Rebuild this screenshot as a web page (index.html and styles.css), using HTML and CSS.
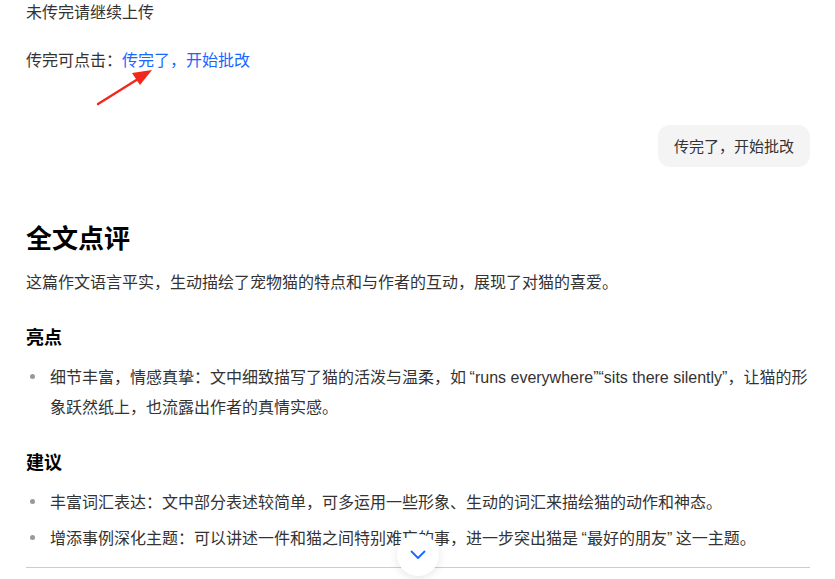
FILE: index.html
```html
<!DOCTYPE html>
<html lang="zh-CN">

<head>
    <meta charset="UTF-8">
    <meta name="viewport" content="width=device-width, initial-scale=1.0">
    <title>作文批改</title>

    <link rel="stylesheet" href="styles.css">
</head>

<body>

    <div class="chat">
        <div class="msg-bot">
            <p class="tip">未传完请继续上传</p>
            <p class="tip tip-action">传完可点击：<a href="#" class="link">传完了，开始批改</a></p>
        </div>

        <div class="msg-user">
            <div class="bubble">传完了，开始批改</div>
        </div>

        <div class="review">
            <h2>全文点评</h2>
            <p>这篇作文语言平实，生动描绘了宠物猫的特点和与作者的互动，展现了对猫的喜爱。</p>

            <h3>亮点</h3>
            <ul>
                <li>细节丰富，情感真挚：文中细致描写了猫的活泼与温柔，如 <span class="en">“runs everywhere”“sits there silently”</span>，让猫的形象跃然纸上，也流露出作者的真情实感。</li>
            </ul>

            <h3 class="second">建议</h3>
            <ul>
                <li>丰富词汇表达：文中部分表述较简单，可多运用一些形象、生动的词汇来描绘猫的动作和神态。</li>
                <li>增添事例深化主题：可以讲述一件和猫之间特别难忘的事，进一步突出猫是 <span class="en">“</span>最好的朋友<span class="en">”</span> 这一主题。</li>
            </ul>

            <hr>
        </div>
    </div>

    <!-- red annotation arrow -->
    <svg class="arrow" width="70" height="45" viewBox="0 0 70 45">
        <line x1="6" y1="40" x2="46" y2="15" stroke="#f0281e" stroke-width="2.4" stroke-linecap="round" />
        <polygon points="60,6 40,9 48,21" fill="#f0281e" />
    </svg>

    <button class="scroll-down" type="button">
        <svg width="16" height="10" viewBox="0 0 16 10">
            <polyline points="1.5,1.5 8,8 14.5,1.5" fill="none" stroke="#1a66ff" stroke-width="1.8" stroke-linecap="round" stroke-linejoin="round" />
        </svg>
    </button>

</body>

</html>
```

FILE: styles.css
```css
body {
    font-family: "Microsoft YaHei", "Noto Sans CJK SC", "Noto Sans", sans-serif;
    margin: 0;
    color: #333;
    background-color: #fff;
    overflow: hidden;
    position: relative;
    height: 579px;
}

.chat {
    padding: 0 25px 0 26px;
}

.tip {
    margin: 0;
    font-size: 16px;
    line-height: 22px;
}

.tip-action {
    margin-top: 26px;
}

.link {
    color: #1a66ff;
    text-decoration: none;
}

.msg-user {
    display: flex;
    justify-content: flex-end;
    margin-top: 55px;
}

.bubble {
    background-color: #f4f4f5;
    border-radius: 12px;
    padding: 10px 16px;
    font-size: 15px;
    line-height: 22px;
    color: #333;
}

.review {
    margin-top: 52px;
}

.review h2 {
    margin: 0;
    font-size: 26px;
    line-height: 36px;
    font-weight: 700;
    color: #000;
}

.review p {
    margin: 12px 0 0;
    font-size: 16px;
    line-height: 28px;
}

.review h3 {
    margin: 28px 0 0;
    font-size: 18px;
    line-height: 26px;
    font-weight: 700;
    color: #000;
}

.review ul {
    list-style: none;
    margin: 13px 0 0;
    padding: 0;
}

.review li {
    position: relative;
    padding-left: 24px;
    font-size: 16px;
    line-height: 28px;
    margin-bottom: 8px;
}

.review li::before {
    content: "";
    position: absolute;
    left: 4px;
    top: 12px;
    width: 5px;
    height: 5px;
    border-radius: 50%;
    background-color: #999;
}

.en {
    font-family: "Liberation Sans", Arial, sans-serif;
    font-size: 16px;
}

.review hr {
    margin: 14px 0 0;
    border: none;
    border-top: 1px solid #ccc;
}

.arrow {
    position: absolute;
    left: 92px;
    top: 64px;
}

.scroll-down {
    position: absolute;
    left: 397px;
    top: 534px;
    width: 42px;
    height: 42px;
    border: none;
    border-radius: 50%;
    background-color: #fff;
    box-shadow: 0 2px 10px rgba(0, 0, 0, 0.1);
    display: flex;
    align-items: center;
    justify-content: center;
    padding: 0;
    cursor: pointer;
}
```
